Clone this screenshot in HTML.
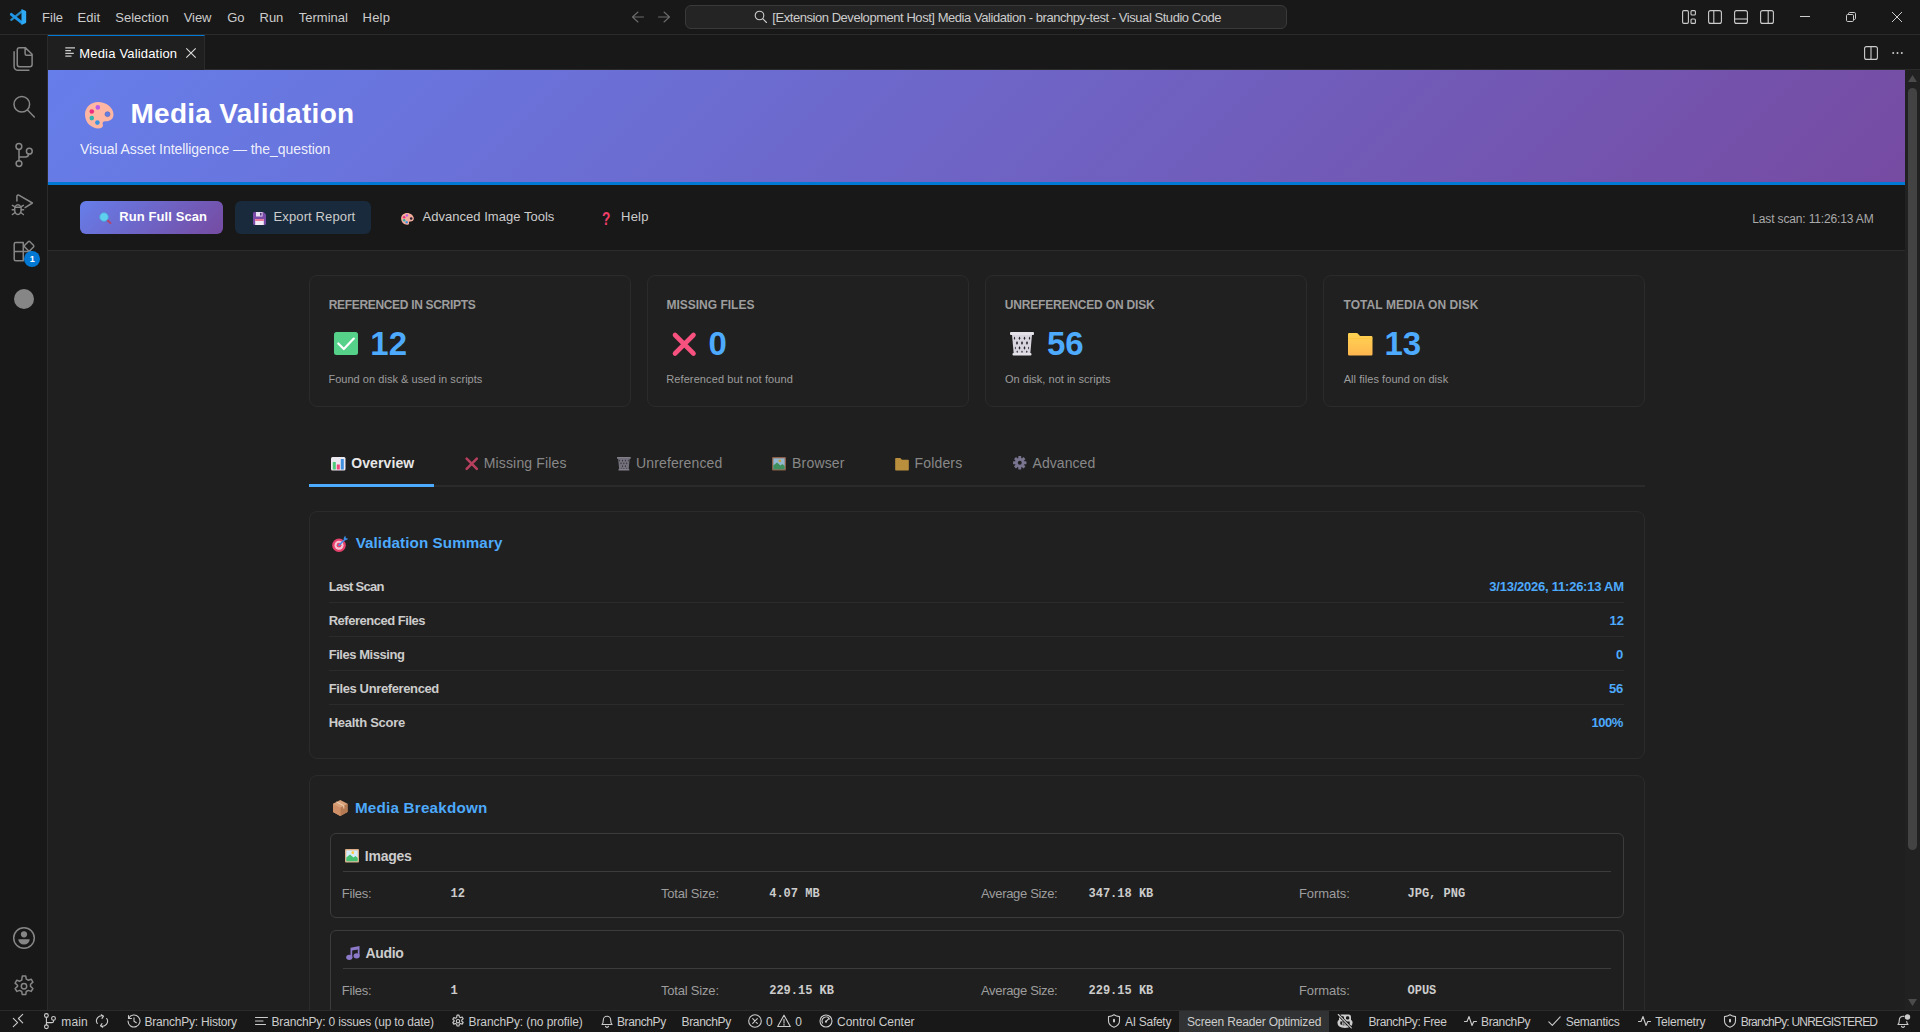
<!DOCTYPE html>
<html lang="en">
<head>
<meta charset="utf-8">
<title>Media Validation</title>
<style>
*{box-sizing:border-box;margin:0;padding:0}
html,body{width:1920px;height:1032px;overflow:hidden;background:#1f1f1f;font-family:"Liberation Sans",sans-serif;color:#ccc}
.abs{position:absolute}
.t{position:absolute;white-space:nowrap;line-height:1}
svg{position:absolute;overflow:visible}
#titlebar{left:0;top:0;width:1920px;height:35px;background:#181818;border-bottom:1px solid #2b2b2b}
#activity{left:0;top:35px;width:48px;height:975px;background:#181818;border-right:1px solid #2b2b2b}
#tabbar{left:48px;top:35px;width:1872px;height:35px;background:#181818;border-bottom:1px solid #2b2b2b}
#tab{left:48px;top:35px;width:157px;height:35px;background:#1f1f1f;border-top:1px solid #0078d4;border-right:1px solid #2b2b2b}
#status{left:0;top:1010px;width:1920px;height:22px;background:#181818;border-top:1px solid #2b2b2b}
.menu{font-size:13px;color:#ccc;top:11px}
.st{font-size:12px;color:#ccc;top:1016px}
#hdr{left:48px;top:70px;width:1857px;height:115px;background:linear-gradient(135deg,#667eea 0%,#764ba2 100%);border-bottom:3px solid #0078d4}
#toolbar{left:48px;top:185px;width:1857px;height:66px;background:#181818;border-bottom:1px solid #2b2b2b}
#scroll{left:1905px;top:70px;width:15px;height:940px;background:#212121}
.card{position:absolute;top:275px;width:322px;height:132px;background:#202020;border:1px solid #2b2b2b;border-radius:8px}
.lbl{font-size:12px;font-weight:bold;color:#9d9d9d;top:299px}
.val{font-size:33px;font-weight:bold;color:#4daafc;top:327px}
.desc{font-size:11px;color:#9d9d9d;top:373.5px}
.tabt{font-size:14px;color:#888;top:456px}
.panel{position:absolute;left:309px;width:1336px;background:#202020;border:1px solid #2b2b2b;border-radius:8px}
.ptitle{font-size:15.2px;color:#4daafc;font-weight:bold}
.rl{font-size:13px;font-weight:bold;color:#ccc}
.rv{font-size:13px;font-weight:bold;color:#4daafc}
.sep{position:absolute;left:329px;width:1295px;height:1px;background:#2b2b2b}
.box{position:absolute;left:330px;width:1294px;border:1px solid #3c3c3c;border-radius:6px;background:#1f1f1f}
.bh{font-size:14px;font-weight:bold;color:#ccc}
.bl{font-size:13px;color:#9d9d9d}
.bv{font-size:12px;font-weight:bold;color:#ccc;font-family:"Liberation Mono",monospace}
.ic{fill:none;stroke:#868686;stroke-width:1.5;stroke-linecap:round;stroke-linejoin:round}
.si{fill:none;stroke:#ccc;stroke-width:1.1;stroke-linecap:round;stroke-linejoin:round}
.ti{fill:none;stroke:#ccc;stroke-width:1.1;stroke-linejoin:round}
</style>
</head>
<body>
<!-- ===== title bar ===== -->
<div class="abs" id="titlebar"></div>
<svg style="left:10px;top:8.900px" width="16.200" height="16" viewBox="0 0 16.200 16"><path d="M11.800 2.400 1.300 10.800" stroke="#2a9fe0" stroke-width="2.200" stroke-linecap="round" opacity=".85"/><path d="M1.300 5.300 11.800 13.700" stroke="#1e96ea" stroke-width="2.900" stroke-linecap="round"/><path d="M11.500 0 15.400 1.800Q16.200 2.200 16.200 3V13Q16.200 13.800 15.400 14.200L11.500 16Z" fill="#2eaaf5"/></svg>
<span class="t menu" style="left:42.00px;letter-spacing:0.050px">File</span>
<span class="t menu" style="left:77.50px;letter-spacing:0.083px">Edit</span>
<span class="t menu" style="left:115.25px">Selection</span>
<span class="t menu" style="left:183.75px;letter-spacing:-0.083px">View</span>
<span class="t menu" style="left:227.25px">Go</span>
<span class="t menu" style="left:259.50px">Run</span>
<span class="t menu" style="left:298.75px">Terminal</span>
<span class="t menu" style="left:362.50px;letter-spacing:0.250px">Help</span>
<svg style="left:630px;top:10px" width="42" height="14" viewBox="0 0 42 14"><path d="M8 2 2.5 7 8 12M2.5 7h11M34 2l5.500 5L34 12M39.500 7H28.500" fill="none" stroke="#6b6b6b" stroke-width="1.1" stroke-linecap="round" stroke-linejoin="round"/></svg>
<div class="abs" style="left:685px;top:5px;width:602px;height:24px;border:1px solid #3a3a3a;border-radius:6px;background:#242424"></div>
<svg style="left:754px;top:10px" width="14" height="14" viewBox="0 0 14 14"><circle cx="5.500" cy="5.500" r="4.300" class="ti"/><path d="M8.700 8.700 12.500 12.500" class="ti" stroke-linecap="round"/></svg>
<span class="t" style="left:772.30px;top:11px;font-size:13px;color:#ccc;letter-spacing:-0.452px">[Extension Development Host] Media Validation - branchpy-test - Visual Studio Code</span>
<!-- layout controls -->
<svg style="left:1682px;top:10px" width="14" height="14" viewBox="0 0 14 14"><rect x=".6" y=".6" width="5.800" height="12.800" rx="1.300" class="ti"/><rect x="9" y=".6" width="4.400" height="4.400" rx="1" class="ti"/><rect x="9" y="9" width="4.400" height="4.400" rx="1" class="ti"/></svg>
<svg style="left:1708px;top:10px" width="14" height="14" viewBox="0 0 14 14"><rect x=".6" y=".6" width="12.800" height="12.800" rx="2" class="ti"/><path d="M5.800 .6v12.800" class="ti"/></svg>
<svg style="left:1734px;top:10px" width="14" height="14" viewBox="0 0 14 14"><rect x=".6" y=".6" width="12.800" height="12.800" rx="2" class="ti"/><path d="M.6 9h12.800" class="ti"/></svg>
<svg style="left:1760px;top:10px" width="14" height="14" viewBox="0 0 14 14"><rect x=".6" y=".6" width="12.800" height="12.800" rx="2" class="ti"/><path d="M8.200 .6v12.800" class="ti"/></svg>
<svg style="left:1800px;top:12px" width="10" height="10" viewBox="0 0 10 10"><path d="M0 4.500h10" stroke="#ccc" stroke-width="1" fill="none"/></svg>
<svg style="left:1846px;top:12px" width="10" height="10" viewBox="0 0 10 10"><rect x=".5" y="2.500" width="7" height="7" rx="1.200" fill="none" stroke="#ccc"/><path d="M2.500 2.500V1.700Q2.500 .5 3.700 .5H8.300Q9.500 .5 9.500 1.700V6.300Q9.500 7.500 8.300 7.500H7.500" fill="none" stroke="#ccc"/></svg>
<svg style="left:1892px;top:12px" width="10" height="10" viewBox="0 0 10 10"><path d="M0 0 10 10M10 0 0 10" stroke="#ccc" stroke-width="1" fill="none"/></svg>

<!-- ===== activity bar / tabs ===== -->
<div class="abs" id="activity"></div>
<div class="abs" id="tabbar"></div>
<div class="abs" id="tab"></div>
<!-- files -->
<svg style="left:12px;top:47px" width="24" height="24" viewBox="0 0 24 24"><path d="M7.450 .85H13.500L20.100 7.300V17.500a2.200 2.200 0 0 1-2.200 2.200H7.450a2.200 2.200 0 0 1-2.200-2.200V3.050A2.200 2.200 0 0 1 7.450 .85ZM13.100 1V6.800a1.550 1.550 0 0 0 1.550 1.550H20" class="ic"/><path d="M2.100 4.800V19.500a3.850 3.850 0 0 0 3.850 3.850H16.900" class="ic"/></svg>
<!-- search -->
<svg style="left:12px;top:95px" width="24" height="24" viewBox="0 0 24 24"><circle cx="9.800" cy="9.300" r="7.800" class="ic"/><path d="M15.500 15 22.300 22" class="ic"/></svg>
<!-- scm -->
<svg style="left:12px;top:143px" width="24" height="24" viewBox="0 0 24 24"><circle cx="6.900" cy="3.500" r="2.900" class="ic"/><circle cx="7" cy="20.600" r="2.900" class="ic"/><circle cx="17.300" cy="8.200" r="2.900" class="ic"/><path d="M7 6.400V17.700M7 13.900H13.500Q16.500 13.900 16.800 11.100" class="ic"/></svg>
<!-- debug -->
<svg style="left:12px;top:191px" width="24" height="24" viewBox="0 0 24 24"><path d="M4.900 10.100V5.300a1.300 1.300 0 0 1 1.900-1.100L20.400 12 13.100 16.700" class="ic"/><ellipse cx="5.900" cy="18.600" rx="3.300" ry="4.900" class="ic"/><path d="M2.900 16.200H8.900M2.600 18.800H.2M9.200 18.800h2.400M3 15.800.4 14.300M8.800 15.800l2.600-1.500M3.200 21.500.4 23.500M8.600 21.500l2.800 2" class="ic"/></svg>
<!-- extensions -->
<svg style="left:12px;top:239px" width="24" height="24" viewBox="0 0 24 24"><path d="M3.700 3.500H11.300V21.700H3.700a1.500 1.500 0 0 1-1.500-1.500V5a1.500 1.500 0 0 1 1.500-1.500ZM2.200 12.400H19" class="ic"/><rect x="13.400" y="3.400" width="7.400" height="7.400" rx="1.200" transform="rotate(45 17.100 7.100)" class="ic"/></svg>
<div class="abs" style="left:24px;top:251px;width:16px;height:16px;border-radius:8px;background:#0078d4"></div>
<span class="t" style="left:29.700px;top:255px;font-size:9px;font-weight:bold;color:#fff">1</span>
<div class="abs" style="left:14px;top:289px;width:20px;height:20px;border-radius:10px;background:#868686"></div>
<!-- account -->
<svg style="left:12px;top:926px" width="24" height="24" viewBox="0 0 24 24"><circle cx="12" cy="12" r="10.300" class="ic"/><circle cx="12" cy="8.300" r="3.100" fill="#868686"/><path d="M6.300 13.300h11.400a5.700 5.200 0 0 1-11.400 0Z" fill="#868686"/></svg>
<!-- gear -->
<svg style="left:12px;top:974px" width="24" height="24" viewBox="0 0 24 24"><path d="M10.300 2h3.400l.6 3.100 1.900 1.100 3-1 1.700 2.900-2.400 2.100v2.200l2.400 2.100-1.700 2.900-3-1-1.900 1.100-.6 3.100h-3.400l-.6-3.100-1.900-1.100-3 1-1.700-2.900 2.400-2.100V11.200L3.100 9.100 4.800 6.200l3 1 1.900-1.100Z" class="ic"/><circle cx="12" cy="12.300" r="2.700" class="ic"/></svg>
<!-- tab -->
<svg style="left:65px;top:47px" width="11" height="10" viewBox="0 0 11 10"><path d="M.3 .8h9.700M.3 3.600h5.700M.3 6.400h8.500M.3 9.200h6.200" stroke="#ccc" stroke-width="1.200" fill="none"/></svg>
<span class="t" style="left:79.30px;top:46.600px;font-size:13px;color:#fff;letter-spacing:0.177px">Media Validation</span>
<svg style="left:185.500px;top:48px" width="10" height="10" viewBox="0 0 10 10"><path d="M.3 .3 9.700 9.700M9.700 .3 .3 9.700" stroke="#ddd" stroke-width="1.100" fill="none"/></svg>
<svg style="left:1864px;top:46px" width="14" height="14" viewBox="0 0 14 14"><rect x=".6" y=".6" width="12.800" height="12.800" rx="2" class="ti"/><path d="M7 .6v12.800" class="ti"/></svg>
<svg style="left:1892px;top:51px" width="11" height="4" viewBox="0 0 11 4"><circle cx="1.200" cy="2" r="1" fill="#ccc"/><circle cx="5.500" cy="2" r="1" fill="#ccc"/><circle cx="9.800" cy="2" r="1" fill="#ccc"/></svg>
<!-- ===== webview ===== -->
<div class="abs" id="hdr"></div>
<!-- palette -->
<svg style="left:84.700px;top:101.800px" width="28.500" height="26.400" viewBox="0 0 28.500 26.400"><path d="M13 0C21 0 28.500 5.500 28.500 12.500 28.500 17.500 24.500 19.500 20.500 19.200 18 19 17.200 20.500 17.800 22.500 18.500 25 16.500 26.400 13.500 26.400 6 26.400 0 20.500 0 12.500 0 5 6 0 13 0Z" fill="#ffb7a4"/><circle cx="22.500" cy="12.200" r="2.500" fill="#5f7fe6" stroke="#5b62b5" stroke-width=".6"/><circle cx="12.800" cy="5.400" r="2.300" fill="#bb5ce8"/><circle cx="6.800" cy="9.500" r="2.300" fill="#ee2f80"/><circle cx="6.800" cy="16.100" r="2.300" fill="#2fb5ad"/><circle cx="12.400" cy="20.600" r="2.300" fill="#3a92dd"/></svg>
<span class="t" style="left:130.45px;top:100px;font-size:28px;font-weight:bold;color:#fff;letter-spacing:0.287px">Media Validation</span>
<span class="t" style="left:79.95px;top:142px;font-size:14px;color:rgba(255,255,255,.9);letter-spacing:-0.059px">Visual Asset Intelligence — the_question</span>
<div class="abs" id="toolbar"></div>
<div class="abs" style="left:80px;top:201px;width:143px;height:33px;border-radius:6px;background:linear-gradient(135deg,#667eea,#764ba2)"></div>
<!-- magnifier -->
<svg style="left:98.500px;top:212px" width="13" height="12" viewBox="0 0 13 12"><path d="M7.500 7.500 11.500 11" stroke="#b0456e" stroke-width="2" stroke-linecap="round"/><circle cx="5" cy="5" r="4.300" fill="#5fd0ee" stroke="#4aa6d8" stroke-width=".8"/></svg>
<span class="t" style="left:119.25px;top:210.300px;font-size:13px;font-weight:bold;color:#fff;letter-spacing:0.087px">Run Full Scan</span>
<div class="abs" style="left:235px;top:201px;width:136px;height:33px;border-radius:6px;background:#182a3b"></div>
<!-- floppy -->
<svg style="left:253px;top:211.500px" width="13" height="13" viewBox="0 0 13 13"><path d="M1.500 0h9L13 2.500v9A1.500 1.500 0 0 1 11.500 13h-10A1.500 1.500 0 0 1 0 11.500v-10A1.500 1.500 0 0 1 1.500 0Z" fill="#7a4aa8"/><rect x="3" y="0" width="6.500" height="4.500" fill="#e9dff3"/><rect x="7" y=".8" width="1.600" height="2.800" fill="#5a3486"/><rect x="2.200" y="7" width="8.600" height="6" fill="#f3eaf7"/><rect x="2.200" y="7" width="8.600" height="2" fill="#e9799a"/></svg>
<span class="t" style="left:273.50px;top:210.300px;font-size:13px;color:#ccc;letter-spacing:0.125px">Export Report</span>
<!-- small palette -->
<svg style="left:401.100px;top:213px" width="13" height="11.800" viewBox="0 0 28.500 26.400"><path d="M13 0C21 0 28.500 5.500 28.500 12.500 28.500 17.500 24.500 19.500 20.500 19.200 18 19 17.200 20.500 17.800 22.500 18.500 25 16.500 26.400 13.500 26.400 6 26.400 0 20.500 0 12.500 0 5 6 0 13 0Z" fill="#f5ab9b"/><circle cx="22.500" cy="12.200" r="2.900" fill="#2a2030"/><circle cx="12.800" cy="5.400" r="2.700" fill="#bb5ce8"/><circle cx="6.800" cy="9.500" r="2.700" fill="#ee2f80"/><circle cx="6.800" cy="16.100" r="2.700" fill="#2fb5ad"/><circle cx="12.400" cy="20.600" r="2.700" fill="#3a92dd"/></svg>
<span class="t" style="left:422.50px;top:210.300px;font-size:13px;color:#ccc;letter-spacing:0.029px">Advanced Image Tools</span>
<span class="t" style="left:602.300px;top:210.600px;font-size:17.500px;font-weight:bold;color:#ee3e6a;transform:scaleX(.78);transform-origin:0 0">?</span>
<span class="t" style="left:621.00px;top:210.300px;font-size:13px;color:#ccc;letter-spacing:0.250px">Help</span>
<span class="t" style="left:1752.30px;top:212.500px;font-size:12px;color:#aaa;letter-spacing:-0.148px">Last scan: 11:26:13 AM</span>

<!-- cards -->
<div class="card" style="left:309px"></div>
<div class="card" style="left:647px"></div>
<div class="card" style="left:985px"></div>
<div class="card" style="left:1323px"></div>
<span class="t lbl" style="left:328.65px;letter-spacing:-0.317px">REFERENCED IN SCRIPTS</span>
<span class="t lbl" style="left:666.45px">MISSING FILES</span>
<span class="t lbl" style="left:1004.75px;letter-spacing:-0.179px">UNREFERENCED ON DISK</span>
<span class="t lbl" style="left:1343.45px;letter-spacing:0.083px">TOTAL MEDIA ON DISK</span>
<!-- check -->
<svg style="left:334px;top:332px" width="24" height="23" viewBox="0 0 24 23"><rect width="24" height="23" rx="2.500" fill="#55d18a"/><path d="M4.300 11.500 9.800 17 19.800 6.600" fill="none" stroke="#fff" stroke-width="2.200" stroke-linecap="round" stroke-linejoin="round"/></svg>
<!-- cross -->
<svg style="left:672px;top:331.500px" width="24.500" height="24.500" viewBox="0 0 24.500 24.500"><path d="M3 3 21.500 21.500M21.500 3 3 21.500" stroke="#f7527f" stroke-width="4.600" stroke-linecap="round"/></svg>
<!-- trash -->
<svg style="left:1010px;top:331.500px" width="24" height="23.500" viewBox="0 0 24 23.500"><path d="M2 2.500h20L20.300 21.500H3.700Z" fill="#d9d5df"/><rect x="0" y="0" width="24" height="3" rx="1" fill="#e4e1e8"/><rect x="2.500" y="21" width="19" height="2.500" rx="1" fill="#e4e1e8"/><g fill="#2a2930"><path d="M4.500 4.500l.8 1.800-.8 1.800-.8-1.800ZM9.500 4.500l1 1.800-1 1.800-1-1.800ZM14.500 4.500l1 1.800-1 1.800-1-1.800ZM19.500 4.500l.8 1.800-.8 1.800-.8-1.800ZM7 9l1.100 2L7 13 5.900 11ZM12 9l1.100 2L12 13l-1.100-2ZM17 9l1.100 2L17 13l-1.100-2ZM9.500 14l1 1.900-1 1.900-1-1.900ZM14.500 14l1 1.900-1 1.900-1-1.900ZM5.300 14.500l.7 1.500-.7 1.500-.5-1.500ZM18.700 14.500l.5 1.500-.5 1.500-.7-1.500ZM7.200 18.500l.8 1.200-.8 1.200-.8-1.200ZM12 18.500l.8 1.200-.8 1.200-.8-1.200ZM16.800 18.500l.8 1.200-.8 1.200-.8-1.200Z"/></g></svg>
<!-- folder -->
<svg style="left:1348px;top:332.500px" width="24.500" height="22.500" viewBox="0 0 24.500 22.500"><defs><linearGradient id="fg" x1="0" y1="0" x2="0" y2="1"><stop offset="0" stop-color="#ffd352"/><stop offset="1" stop-color="#ffb74f"/></linearGradient></defs><path d="M1.200 0H8.500Q9.300 0 9.800 .5L12 3H23.300Q24.500 3 24.500 4.200V21.300Q24.500 22.500 23.300 22.500H1.200Q0 22.500 0 21.300V1.200Q0 0 1.200 0Z" fill="url(#fg)"/><path d="M0 5.500H24.500" stroke="#ffc233" stroke-width="1" opacity=".6"/></svg>
<span class="t val" style="left:370.30px">12</span>
<span class="t val" style="left:708.38px">0</span>
<span class="t val" style="left:1046.90px">56</span>
<span class="t val" style="left:1384.45px">13</span>
<span class="t desc" style="left:328.40px;letter-spacing:0.037px">Found on disk &amp; used in scripts</span>
<span class="t desc" style="left:666.20px;letter-spacing:0.109px">Referenced but not found</span>
<span class="t desc" style="left:1005.00px;letter-spacing:0.011px">On disk, not in scripts</span>
<span class="t desc" style="left:1343.70px;letter-spacing:0.052px">All files found on disk</span>
<!-- tabs -->
<div class="abs" style="left:309px;top:485px;width:1336px;height:2px;background:#2b2b2b"></div>
<div class="abs" style="left:309px;top:484px;width:125px;height:3px;background:#4daafc"></div>
<!-- bar chart -->
<svg style="left:331px;top:456.500px" width="14.500" height="13.500" viewBox="0 0 14.500 13.500"><rect width="14.500" height="13.500" rx="1.500" fill="#ece8f0"/><rect x="1.800" y="5" width="3" height="7.500" fill="#4cc97a"/><rect x="5.800" y="7.500" width="3" height="5" fill="#f0457a"/><rect x="9.800" y="2" width="3" height="10.500" fill="#3f8fe0"/></svg>
<span class="t tabt" style="left:351.20px;color:#e7e7e7;font-weight:bold;letter-spacing:0.107px">Overview</span>
<svg style="left:465px;top:456.500px" width="13.500" height="13.500" viewBox="0 0 24.500 24.500"><path d="M3 3 21.500 21.500M21.500 3 3 21.500" stroke="#b8405f" stroke-width="4.600" stroke-linecap="round"/></svg>
<span class="t tabt" style="left:483.75px;letter-spacing:0.150px">Missing Files</span>
<svg style="left:617px;top:456.500px" width="13.800" height="13.500" viewBox="0 0 24 23.500"><path d="M2 2.500h20L20.300 21.500H3.700Z" fill="#74717c"/><rect x="0" y="0" width="24" height="3" rx="1" fill="#827f8a"/><rect x="2.500" y="21" width="19" height="2.500" rx="1" fill="#827f8a"/><g fill="#2a2930"><path d="M4.500 4.500l.8 1.800-.8 1.800-.8-1.800ZM9.500 4.500l1 1.800-1 1.800-1-1.800ZM14.500 4.500l1 1.800-1 1.800-1-1.800ZM19.500 4.500l.8 1.800-.8 1.800-.8-1.800ZM7 9l1.100 2L7 13 5.900 11ZM12 9l1.100 2L12 13l-1.100-2ZM17 9l1.100 2L17 13l-1.100-2ZM9.500 14l1 1.900-1 1.900-1-1.900ZM14.500 14l1 1.900-1 1.900-1-1.900ZM7.200 18.500l.8 1.200-.8 1.200-.8-1.200ZM12 18.500l.8 1.200-.8 1.200-.8-1.200ZM16.800 18.500l.8 1.200-.8 1.200-.8-1.200Z"/></g></svg>
<span class="t tabt" style="left:636.10px;letter-spacing:0.118px">Unreferenced</span>
<svg style="left:772px;top:456.500px" width="14" height="13.500" viewBox="0 0 14 13.500"><rect width="14" height="13.500" rx="1" fill="#8c5d47"/><rect x="1.300" y="1.300" width="11.400" height="10.900" fill="#93b7cf"/><circle cx="7.800" cy="3.800" r="1.400" fill="#c9a23c"/><path d="M1.300 8.500 5 5.500 8.500 8.500 10.500 7 12.700 9V12.200H1.300Z" fill="#3f8f5e"/></svg>
<span class="t tabt" style="left:792.05px;letter-spacing:0.183px">Browser</span>
<svg style="left:895px;top:457.500px" width="14" height="12.500" viewBox="0 0 24.500 22.500"><path d="M1.200 0H8.500Q9.300 0 9.800 .5L12 3H23.300Q24.500 3 24.500 4.200V21.300Q24.500 22.500 23.300 22.500H1.200Q0 22.500 0 21.300V1.200Q0 0 1.200 0Z" fill="#b98f3e"/></svg>
<span class="t tabt" style="left:914.55px;letter-spacing:0.150px">Folders</span>
<svg style="left:1012.600px;top:456.200px" width="13.500" height="13.500" viewBox="-6.750 -6.750 13.500 13.500"><g fill="#79748f"><rect x="-1.450" y="-6.700" width="2.900" height="4" rx=".5" transform="rotate(0)"/><rect x="-1.450" y="-6.700" width="2.900" height="4" rx=".5" transform="rotate(45)"/><rect x="-1.450" y="-6.700" width="2.900" height="4" rx=".5" transform="rotate(90)"/><rect x="-1.450" y="-6.700" width="2.900" height="4" rx=".5" transform="rotate(135)"/><rect x="-1.450" y="-6.700" width="2.900" height="4" rx=".5" transform="rotate(180)"/><rect x="-1.450" y="-6.700" width="2.900" height="4" rx=".5" transform="rotate(225)"/><rect x="-1.450" y="-6.700" width="2.900" height="4" rx=".5" transform="rotate(270)"/><rect x="-1.450" y="-6.700" width="2.900" height="4" rx=".5" transform="rotate(315)"/><circle r="4.800"/></g><circle r="2" fill="#202020"/></svg>
<span class="t tabt" style="left:1032.50px;letter-spacing:0.057px">Advanced</span>

<!-- validation summary -->
<div class="panel" style="top:511px;height:248px"></div>
<!-- dart -->
<svg style="left:331px;top:534.500px" width="17.500" height="17.500" viewBox="0 0 17.500 17.500"><circle cx="8" cy="10.200" r="6.800" fill="#e6406c"/><circle cx="8" cy="10.200" r="4.500" fill="#f6c3d3"/><circle cx="8" cy="10.200" r="2.400" fill="#e6406c"/><path d="M8 10.200 14.500 3.700" stroke="#3f8fe8" stroke-width="1.600" stroke-linecap="round"/><path d="M12.500 3.200 14.300 .5 14.800 3.200 17.300 3.800 14.800 5.500Z" fill="#3f8fe8"/></svg>
<span class="t ptitle" style="left:355.65px;top:535.4px;letter-spacing:0.091px">Validation Summary</span>
<span class="t rl" style="left:328.65px;top:580px;letter-spacing:-0.688px">Last Scan</span><span class="t rv" style="left:1489.35px;top:580px;letter-spacing:-0.238px">3/13/2026, 11:26:13 AM</span>
<div class="sep" style="top:602px"></div>
<span class="t rl" style="left:328.65px;top:614px;letter-spacing:-0.477px">Referenced Files</span><span class="t rv" style="left:1609.48px;top:614px">12</span>
<div class="sep" style="top:636px"></div>
<span class="t rl" style="left:328.65px;top:648px;letter-spacing:-0.442px">Files Missing</span><span class="t rv" style="left:1615.98px;top:648px">0</span>
<div class="sep" style="top:670px"></div>
<span class="t rl" style="left:328.65px;top:682px;letter-spacing:-0.376px">Files Unreferenced</span><span class="t rv" style="left:1608.90px;top:682px">56</span>
<div class="sep" style="top:704px"></div>
<span class="t rl" style="left:328.65px;top:716px;letter-spacing:-0.259px">Health Score</span><span class="t rv" style="left:1591.55px;top:716px;letter-spacing:-0.517px">100%</span>

<!-- media breakdown -->
<div class="panel" style="top:775px;height:300px"></div>
<!-- package -->
<svg style="left:333px;top:799.500px" width="14.500" height="16" viewBox="0 0 14.500 16"><path d="M7.250 0 14.500 3.800V12L7.250 16 0 12V3.800Z" fill="#d9a27a"/><path d="M7.250 7.800 14.500 3.800V12L7.250 16Z" fill="#b57a52"/><path d="M0 3.800 7.250 7.800V16L0 12Z" fill="#cf9068"/><path d="M3.500 1.900 10.800 5.800V8.500" fill="none" stroke="#f0d2b8" stroke-width="1"/></svg>
<span class="t ptitle" style="left:354.90px;top:799.8px;letter-spacing:0.232px">Media Breakdown</span>
<div class="box" style="top:833px;height:85px"></div>
<svg style="left:345px;top:849.300px" width="14" height="13.700" viewBox="0 0 14 13.500"><rect width="14" height="13.500" rx="1" fill="#dcae86"/><rect x="1.300" y="1.300" width="11.400" height="10.900" fill="#d6ecfb"/><circle cx="7.800" cy="3.600" r="1.400" fill="#ffc83d"/><path d="M1.300 8.500 5 5.500 8.500 8.500 10.500 7 12.700 9V12.200H1.300Z" fill="#46c06f"/></svg>
<span class="t bh" style="left:364.80px;top:849px;letter-spacing:-0.250px">Images</span>
<div class="abs" style="left:343px;top:871px;width:1268px;height:1px;background:#3c3c3c"></div>
<span class="t bl" style="left:341.80px;top:887px;letter-spacing:-0.250px">Files:</span><span class="t bv" style="left:450.500px;top:887.500px">12</span>
<span class="t bl" style="left:660.95px;top:887px;letter-spacing:-0.190px">Total Size:</span><span class="t bv" style="left:769.200px;top:887.500px">4.07 MB</span>
<span class="t bl" style="left:981.00px;top:887px;letter-spacing:-0.333px">Average Size:</span><span class="t bv" style="left:1088.500px;top:887.500px">347.18 KB</span>
<span class="t bl" style="left:1299.00px;top:887px;letter-spacing:-0.071px">Formats:</span><span class="t bv" style="left:1407.500px;top:887.500px">JPG, PNG</span>
<div class="box" style="top:930px;height:120px"></div>
<svg style="left:345.500px;top:946px" width="14" height="14" viewBox="0 0 14 14"><path d="M4.500 1.800 13.500 0V9.800H11.800V3.500L6.200 4.600V11.500H4.500Z" fill="#8d79c9"/><ellipse cx="3.300" cy="11.300" rx="3.100" ry="2.600" fill="#8d79c9"/><ellipse cx="10.600" cy="9.800" rx="3.100" ry="2.600" fill="#8d79c9"/></svg>
<span class="t bh" style="left:365.40px;top:946px;letter-spacing:-0.312px">Audio</span>
<div class="abs" style="left:343px;top:968px;width:1268px;height:1px;background:#3c3c3c"></div>
<span class="t bl" style="left:341.80px;top:984px;letter-spacing:-0.250px">Files:</span><span class="t bv" style="left:450.500px;top:984.500px">1</span>
<span class="t bl" style="left:660.95px;top:984px;letter-spacing:-0.190px">Total Size:</span><span class="t bv" style="left:769.200px;top:984.500px">229.15 KB</span>
<span class="t bl" style="left:981.00px;top:984px;letter-spacing:-0.333px">Average Size:</span><span class="t bv" style="left:1088.500px;top:984.500px">229.15 KB</span>
<span class="t bl" style="left:1299.00px;top:984px;letter-spacing:-0.071px">Formats:</span><span class="t bv" style="left:1407.500px;top:984.500px">OPUS</span>

<!-- scrollbar -->
<div class="abs" id="scroll"></div>
<div class="abs" style="left:1908px;top:88px;width:9px;height:762px;border-radius:5px;background:#434343"></div>
<svg style="left:1908px;top:75px" width="9" height="7" viewBox="0 0 9 7"><path d="M4.500 0 9 7H0Z" fill="#4b4b4b"/></svg>
<svg style="left:1908px;top:999px" width="9" height="7" viewBox="0 0 9 7"><path d="M0 0H9L4.500 7Z" fill="#4b4b4b"/></svg>
<!-- ===== status bar ===== -->
<div class="abs" id="status"></div>
<div class="abs" style="left:1179px;top:1011px;width:150px;height:21px;background:#313233"></div>
<svg style="left:12px;top:1013px" width="12" height="15" viewBox="0 0 12 15"><path d="M1.300 5.300 5.600 9.600 1.300 13.600M10.700 1.300 6.400 5.500 10.700 9.800" class="si" stroke-width="1.200"/></svg>
<svg style="left:42px;top:1013px" width="16" height="16" viewBox="0 0 16 16"><circle cx="4.400" cy="2.500" r="1.900" class="si"/><circle cx="4.400" cy="13.750" r="1.900" class="si"/><circle cx="11.500" cy="5.400" r="1.900" class="si"/><path d="M4.400 4.400V11.850M11.500 7.300V8.200Q11.500 9.600 10 9.600H4.400" class="si"/></svg>
<span class="t st" style="left:61.25px;letter-spacing:0.167px">main</span>
<svg style="left:94.500px;top:1014px" width="14" height="14" viewBox="0 0 14 14"><path d="M2.300 9.500A5 5 0 0 1 8.500 2.200M8.500 2.200 6.300 .8M8.500 2.200 7 4.400M11.700 4.500A5 5 0 0 1 5.500 11.800M5.500 11.800 7.700 13.200M5.500 11.800 7 9.600" class="si"/></svg>
<svg style="left:126.500px;top:1014px" width="14" height="14" viewBox="0 0 14 14"><path d="M1.700 4.200A6 6 0 1 1 1 7M1.500 1.500v3h3M7 3.800V7.300l2.300 1.400" class="si"/></svg>
<span class="t st" style="left:144.50px;letter-spacing:-0.219px">BranchPy: History</span>
<svg style="left:254.500px;top:1014px" width="13" height="14" viewBox="0 0 13 14"><path d="M.5 3.500h12M.5 7h7.500M.5 10.500h10" class="si"/></svg>
<span class="t st" style="left:271.50px;letter-spacing:-0.168px">BranchPy: 0 issues (up to date)</span>
<svg style="left:450.500px;top:1014px" width="14" height="14" viewBox="0 0 24 24"><path d="M10.300 2h3.400l.6 3.100 1.900 1.100 3-1 1.700 2.900-2.400 2.100v2.200l2.400 2.100-1.700 2.900-3-1-1.900 1.100-.6 3.100h-3.400l-.6-3.100-1.900-1.100-3 1-1.700-2.900 2.400-2.100V11.200L3.100 9.100 4.800 6.200l3 1 1.900-1.100Z" fill="none" stroke="#ccc" stroke-width="1.900" stroke-linejoin="round"/><circle cx="12" cy="12.300" r="2.900" fill="none" stroke="#ccc" stroke-width="1.900"/></svg>
<span class="t st" style="left:468.50px;letter-spacing:-0.083px">BranchPy: (no profile)</span>
<svg style="left:599.500px;top:1014px" width="14" height="14" viewBox="0 0 14 14"><path d="M2 10.500c1-1 1.300-2 1.300-4.500a3.700 3.700 0 0 1 7.400 0c0 2.500 .3 3.500 1.300 4.500ZM5.500 12.300a1.600 1.600 0 0 0 3 0" class="si"/></svg>
<span class="t st" style="left:617.00px;letter-spacing:-0.400px">BranchPy</span>
<span class="t st" style="left:681.50px;letter-spacing:-0.329px">BranchPy</span>
<svg style="left:748px;top:1014px" width="14" height="14" viewBox="0 0 14 14"><circle cx="7" cy="7" r="6.300" class="si"/><path d="M4.700 4.700 9.300 9.300M9.300 4.700 4.700 9.300" class="si"/></svg>
<span class="t st" style="left:765.88px">0</span>
<svg style="left:777px;top:1014px" width="14" height="14" viewBox="0 0 14 14"><path d="M7 1.200 13.300 12.500H.7ZM7 5.200v3.800M7 10.400v.8" class="si"/></svg>
<span class="t st" style="left:795.17px">0</span>
<svg style="left:819px;top:1014px" width="14" height="14" viewBox="0 0 14 14"><circle cx="7" cy="7" r="6" class="si"/><path d="M3.500 9A4 4 0 0 1 10.500 5M7 7.500 9.800 4.600" class="si"/><circle cx="7" cy="7.700" r="1.100" fill="#ccc"/></svg>
<span class="t st" style="left:837.00px;letter-spacing:-0.038px">Control Center</span>
<svg style="left:1106.500px;top:1014px" width="14" height="14" viewBox="0 0 14 14"><path d="M7 .8C8.700 2 10.500 2.500 12.500 2.600V7c0 3-2.300 5-5.500 6.300C3.800 12 1.500 10 1.500 7V2.600C3.500 2.500 5.300 2 7 .8Z" class="si"/><rect x="6" y="4.700" width="2" height="3.800" rx="1" fill="#ccc"/></svg>
<span class="t st" style="left:1125.00px;letter-spacing:-0.287px">AI Safety</span>
<span class="t st" style="left:1187.00px;letter-spacing:-0.170px">Screen Reader Optimized</span>
<svg style="left:1337px;top:1013.500px" width="16" height="14.500" viewBox="0 0 16 14.500"><path d="M4.300 .6H11.700Q14 .6 14 3.200V5.800Q15.600 6.800 15.600 8.600 15.600 13.900 8 13.900 .4 13.900 .4 8.600 .4 6.800 2 5.800V3.200Q2 .6 4.300 .6Z" fill="#ccc"/><rect x="3.800" y="2.300" width="3.200" height="3.300" rx="1.300" fill="#181818"/><rect x="9" y="2.300" width="3.200" height="3.300" rx="1.300" fill="#181818"/><path d="M3.300 7.500H7.300V11.500Q5 11.400 3.300 10.300ZM8.700 7.500H12.700V10.300Q11 11.400 8.700 11.500Z" fill="#181818"/><rect x="5.200" y="8.200" width="1.400" height="2.600" fill="#ccc"/><path d="M1.300 .5 14.300 13.800" stroke="#181818" stroke-width="2.600"/><path d="M1.300 .5 14.300 13.800" stroke="#ccc" stroke-width="1.100" stroke-linecap="round"/></svg>
<span class="t st" style="left:1368.50px;letter-spacing:-0.388px">BranchPy: Free</span>
<svg style="left:1464px;top:1014px" width="13" height="14" viewBox="0 0 13 14"><path d="M.5 7.500H3L5 2.500 8 11.500 9.800 7.500H12.500" class="si"/></svg>
<span class="t st" style="left:1481.00px;letter-spacing:-0.357px">BranchPy</span>
<svg style="left:1548px;top:1014px" width="13" height="14" viewBox="0 0 13 14"><path d="M.8 7.800 4.300 11.300 12.200 2.800" class="si"/></svg>
<span class="t st" style="left:1565.70px;letter-spacing:-0.250px">Semantics</span>
<svg style="left:1637.500px;top:1014px" width="13" height="14" viewBox="0 0 13 14"><path d="M.5 7.500H3L5 2.500 8 11.500 9.800 7.500H12.500" class="si"/></svg>
<span class="t st" style="left:1655.25px;letter-spacing:-0.219px">Telemetry</span>
<svg style="left:1722.500px;top:1014px" width="14" height="14" viewBox="0 0 14 14"><path d="M7 .8C8.700 2 10.500 2.500 12.500 2.600V7c0 3-2.300 5-5.500 6.300C3.800 12 1.500 10 1.500 7V2.600C3.500 2.500 5.300 2 7 .8Z" class="si"/><rect x="6" y="4.700" width="2" height="3.800" rx="1" fill="#ccc"/></svg>
<span class="t st" style="left:1740.70px;letter-spacing:-0.795px">BranchPy: UNREGISTERED</span>
<svg style="left:1895.500px;top:1014px" width="15" height="14" viewBox="0 0 15 14"><path d="M2 10.500c1-1 1.300-2 1.300-4.500A3.700 3.700 0 0 1 8 2.400M10.700 7.500c.1 1.500 .5 2.300 1.300 3H2M5.500 12.300a1.600 1.600 0 0 0 3 0" class="si"/><circle cx="11.500" cy="3" r="2.700" fill="#ccc"/></svg>
</body>
</html>
